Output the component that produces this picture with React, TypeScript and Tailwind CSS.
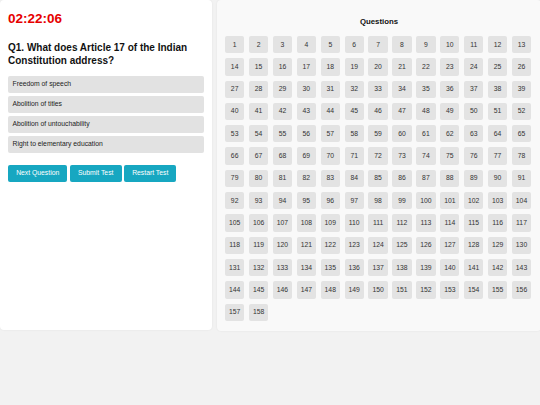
import React from 'react';

const options = [
  'Freedom of speech',
  'Abolition of titles',
  'Abolition of untouchability',
  'Right to elementary education',
];

const numbers = Array.from({ length: 158 }, (_, i) => i + 1);

export default function App() {
  return (
    <div
      className="h-[405px] w-[540px] overflow-hidden bg-[#f2f2f2] flex items-start gap-[5px]"
      style={{ fontFamily: '"Liberation Sans", Arial, sans-serif' }}
    >
      {/* Left: question panel */}
      <div className="w-[212px] h-[330px] shrink-0 bg-white rounded-[4px] shadow-[0_0_2px_rgba(0,0,0,0.08)] px-[8px] pt-[10.6px]">
        <div className="text-[13.5px] leading-[16px] font-bold text-[#e60000]">02:22:06</div>

        <h2 className="mt-[14.3px] text-[10px] leading-[13.3px] font-bold text-[#111]">
          Q1. What does Article 17 of the Indian Constitution address?
        </h2>

        <div className="mt-[8.2px] flex flex-col gap-[3px]">
          {options.map((o) => (
            <div
              key={o}
              className="h-[17px] bg-[#e2e2e2] rounded-[2px] flex items-center pl-[4.5px] text-[6.8px] text-[#222]"
            >
              {o}
            </div>
          ))}
        </div>

        <div className="mt-[12.3px] flex gap-[2.5px]">
          <button className="h-[17px] w-[59.4px] bg-[#17a7c1] rounded-[2px] text-white text-[6.8px]">
            Next Question
          </button>
          <button className="h-[17px] w-[51.7px] bg-[#17a7c1] rounded-[2px] text-white text-[6.8px]">
            Submit Test
          </button>
          <button className="h-[17px] w-[52.3px] bg-[#17a7c1] rounded-[2px] text-white text-[6.8px]">
            Restart Test
          </button>
        </div>
      </div>

      {/* Right: question navigator */}
      <div className="w-[324px] h-[331px] shrink-0 bg-[#f9f9f9] rounded-[4px] shadow-[0_0_2px_rgba(0,0,0,0.08)] pl-[8px] pt-[17px]">
        <div className="text-center text-[7.8px] leading-[10px] font-bold text-[#111] pr-[8px]">Questions</div>
        <div className="mt-[9px] grid grid-cols-[repeat(13,19.3px)] gap-x-[4.62px] gap-y-[5px]">
          {numbers.map((n) => (
            <div
              key={n}
              className="h-[17.3px] bg-[#e3e3e3] rounded-[2px] flex items-center justify-center text-[6.8px] text-[#333]"
            >
              {n}
            </div>
          ))}
        </div>
      </div>
    </div>
  );
}
